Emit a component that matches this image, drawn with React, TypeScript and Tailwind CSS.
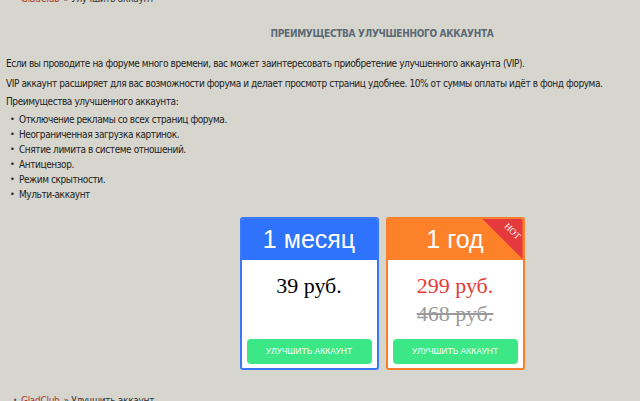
import React from "react";

const font = { fontFamily: '"DejaVu Sans Condensed", "DejaVu Sans", sans-serif' };
const sans = { fontFamily: '"Liberation Sans", Arial, sans-serif' };
const serif = { fontFamily: '"Liberation Serif", "Times New Roman", serif' };

function Crumb() {
  return (
    <div className="flex items-center gap-[4px] pl-[13px] text-[10px] leading-[13px] tracking-[-0.3px]">
      <span className="text-[8px] text-[#555]">•</span>
      <a className="text-[#b03a2e]">GladClub</a>
      <span className="text-[#333]">» Улучшить аккаунт</span>
    </div>
  );
}

function Button() {
  return (
    <div className="px-[5px] pb-[4px]">
      <div
        className="h-[25px] rounded-[4px] bg-[#3ce886] flex items-center justify-center text-white text-[8.5px] uppercase"
        style={sans}
      >
        Улучшить аккаунт
      </div>
    </div>
  );
}

export default function App() {
  const items = [
    "Отключение рекламы со всех страниц форума.",
    "Неограниченная загрузка картинок.",
    "Снятие лимита в системе отношений.",
    "Антицензор.",
    "Режим скрытности.",
    "Мульти-аккаунт",
  ];
  return (
    <div className="w-[640px] h-[401px] overflow-hidden bg-[#d6d5ce]" style={font}>
      <div className="w-[764px] text-[#222] text-[10px] tracking-[-0.42px]">
        <div className="-mt-[8px]">
          <Crumb />
        </div>
        <h2 className="mt-[22px] text-center font-bold text-[#5b6a74] text-[10px] leading-[13px] tracking-[-0.3px]">
          ПРЕИМУЩЕСТВА УЛУЧШЕННОГО АККАУНТА
        </h2>
        <div className="px-[6px] mt-[17px] leading-[13px]">
          <p>Если вы проводите на форуме много времени, вас может заинтересовать приобретение улучшенного аккаунта (VIP).</p>
          <p className="mt-[7px]">VIP аккаунт расширяет для вас возможности форума и делает просмотр страниц удобнее. 10% от суммы оплаты идёт в фонд форума.</p>
          <p className="mt-[5px]">Преимущества улучшенного аккаунта:</p>
          <ul className="mt-[4px] pl-[4px]">
            {items.map((t) => (
              <li key={t} className="flex items-center h-[15px]">
                <span className="w-[9px] text-[9px] leading-none">•</span>
                <span>{t}</span>
              </li>
            ))}
          </ul>
        </div>
        <div className="mt-[15px] flex justify-center gap-[7px] tracking-normal">
          <div className="w-[139px] h-[153px] border-2 border-[#3b78f6] rounded-[3px] bg-white flex flex-col overflow-hidden">
            <div className="h-[41px] bg-[#2f72fb] flex items-center justify-center text-white text-[25px]" style={sans}>
              1 месяц
            </div>
            <div className="flex-1 flex flex-col items-center pt-[12px]" style={serif}>
              <div className="text-[22px] leading-[28px] text-black">39 руб.</div>
            </div>
            <Button />
          </div>
          <div className="relative w-[139px] h-[153px] border-2 border-[#fb7f2a] rounded-[3px] bg-white flex flex-col overflow-hidden">
            <div className="h-[41px] bg-[#fd8128] flex items-center justify-center text-white text-[25px]" style={sans}>
              1 год
            </div>
            <div className="absolute top-0 right-0 w-[40px] h-[40px] bg-[#e53a3d] [clip-path:polygon(0_0,100%_0,100%_100%)]">
              <span className="absolute top-[8px] right-[1px] rotate-45 text-white text-[9px] leading-none" style={serif}>
                HOT
              </span>
            </div>
            <div className="flex-1 flex flex-col items-center pt-[12px]" style={serif}>
              <div className="text-[22px] leading-[28px] text-[#e53935]">299 руб.</div>
              <div className="text-[22px] leading-[28px] text-[#9a9a9a] line-through">468 руб.</div>
            </div>
            <Button />
          </div>
        </div>
        <div className="mt-[24px]">
          <Crumb />
        </div>
      </div>
    </div>
  );
}
